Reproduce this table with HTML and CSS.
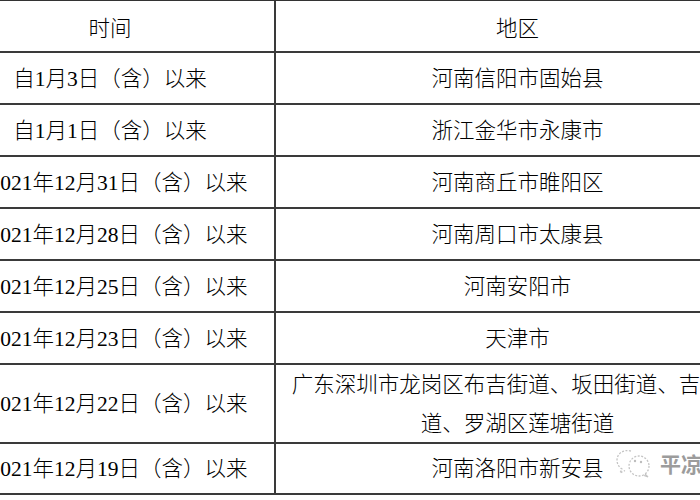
FILE: index.html
```html
<!DOCTYPE html>
<html lang="zh-CN">
<head>
<meta charset="utf-8">
<title>表格</title>
<link rel="stylesheet" href="styles.css">
</head>
<body>
<div class="page">
  <div class="grid">
    <div class="c c1 h"><span class="t">时间</span></div>
    <div class="c c2 h"><span class="t">地区</span></div>

    <div class="c c1"><span class="t">自1月3日（含）以来</span></div>
    <div class="c c2"><span class="t">河南信阳市固始县</span></div>

    <div class="c c1"><span class="t">自1月1日（含）以来</span></div>
    <div class="c c2"><span class="t">浙江金华市永康市</span></div>

    <div class="c c1"><span class="t">2021年12月31日（含）以来</span></div>
    <div class="c c2"><span class="t">河南商丘市睢阳区</span></div>

    <div class="c c1"><span class="t">2021年12月28日（含）以来</span></div>
    <div class="c c2"><span class="t">河南周口市太康县</span></div>

    <div class="c c1"><span class="t">2021年12月25日（含）以来</span></div>
    <div class="c c2"><span class="t">河南安阳市</span></div>

    <div class="c c1"><span class="t">2021年12月23日（含）以来</span></div>
    <div class="c c2"><span class="t">天津市</span></div>

    <div class="c c1"><span class="t">2021年12月22日（含）以来</span></div>
    <div class="c c2"><span class="t">广东深圳市龙岗区布吉街道、坂田街道、吉华街道、罗湖区莲塘街道</span></div>

    <div class="c c1"><span class="t">2021年12月19日（含）以来</span></div>
    <div class="c c2"><span class="t">河南洛阳市新安县</span></div>
  </div>

  <div class="mark">
    <svg class="mark-icon" width="38" height="32" viewBox="0 0 38 32">
      <path d="M17 4 C9 2 3 7 3 13 C3 17 5 20 8 22 L6 26 L11 23.5" fill="none" stroke="#c4c4c4" stroke-width="1.3" stroke-dasharray="2 1.5"/>
      <circle cx="25" cy="19" r="10" fill="none" stroke="#c4c4c4" stroke-width="1.3" stroke-dasharray="2 1.5"/>
      <circle cx="21" cy="14" r="1.2" fill="#bdbdbd"/>
      <circle cx="27" cy="15" r="1.2" fill="#bdbdbd"/>
      <path d="M31 27 L34 30 L30 28.5" fill="none" stroke="#c4c4c4" stroke-width="1.2"/>
    </svg>
    <span class="mark-text">平凉发布</span>
  </div>
</div>
</body>
</html>
```

FILE: styles.css
```css
html, body {
  margin: 0;
  padding: 0;
  background: #ffffff;
}

.page {
  position: relative;
  width: 700px;
  height: 500px;
  overflow: hidden;
  font-family: "Liberation Serif", "Noto Sans CJK SC", serif;
  font-size: 21.5px;
  font-weight: 300;
  color: #000000;
}

.grid {
  display: grid;
  grid-template-columns: 330px 485px;
  grid-template-rows: repeat(7, 52px) 79px 51px;
  width: max-content;
  margin-left: -56px;
  border-top: 1px solid #333333;
  border-left: 2px solid #333333;
}

.c {
  box-sizing: border-box;
  display: flex;
  align-items: center;
  padding-top: 2px;
  border-right: 2px solid #3a3a3a;
  border-bottom: 2px solid #3a3a3a;
}

.c1 {
  padding-left: 43.5px;
  padding-right: 43.5px;
}

.c2 {
  padding-left: 11.5px;
  padding-right: 11.5px;
}

.h {
  padding-top: 7px;
}

.t {
  flex: 1 1 auto;
  min-width: 0;
  text-align: center;
  line-height: 39px;
}

.c1 .t {
  white-space: nowrap;
}

.mark {
  position: absolute;
  left: 614px;
  top: 447px;
  display: flex;
  align-items: center;
  gap: 8px;
  white-space: nowrap;
}

.mark-icon {
  display: block;
}

.mark-text {
  font-family: "Noto Sans CJK SC", sans-serif;
  font-size: 21px;
  font-weight: 700;
  color: #9c9c9c;
}
```
